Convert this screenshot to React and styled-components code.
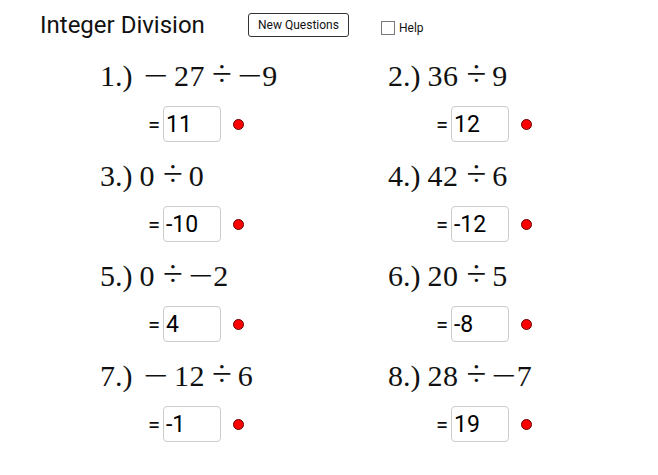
import React from 'react';
import styled, { createGlobalStyle } from 'styled-components';

const GlobalStyle = createGlobalStyle`
  body {
    margin: 0;
    background: #fff;
    font-family: Roboto, "Liberation Sans", sans-serif;
  }
`;

const M = '\u2212';

// each part: [text, kind, gap before] — kind: 'n' number, 'd' divide, 'm' minus, 'l' label
const problems = [
  { id: 1, parts: [['1.)', 'l', 0], [M, 'm', 14], ['27', 'n', 10], ['÷', 'd', 7], [M, 'm', 9], ['9', 'n', 4]], answer: '11' },
  { id: 2, parts: [['2.)', 'l', 0], ['36', 'n', 7], ['÷', 'd', 8], ['9', 'n', 6]], answer: '12' },
  { id: 3, parts: [['3.)', 'l', 0], ['0', 'n', 7], ['÷', 'd', 8], ['0', 'n', 6]], answer: '-10' },
  { id: 4, parts: [['4.)', 'l', 0], ['42', 'n', 7], ['÷', 'd', 8], ['6', 'n', 6]], answer: '-12' },
  { id: 5, parts: [['5.)', 'l', 0], ['0', 'n', 7], ['÷', 'd', 8], [M, 'm', 9], ['2', 'n', 4]], answer: '4' },
  { id: 6, parts: [['6.)', 'l', 0], ['20', 'n', 7], ['÷', 'd', 8], ['5', 'n', 6]], answer: '-8' },
  { id: 7, parts: [['7.)', 'l', 0], [M, 'm', 14], ['12', 'n', 10], ['÷', 'd', 7], ['6', 'n', 6]], answer: '-1' },
  { id: 8, parts: [['8.)', 'l', 0], ['28', 'n', 7], ['÷', 'd', 8], [M, 'm', 9], ['7', 'n', 4]], answer: '19' }
];

const App = () => (
  <Page>
    <GlobalStyle />
    <Header>
      <Title>Integer Division</Title>
      <Button type="button">New Questions</Button>
      <HelpLabel>
        <Box />
        Help
      </HelpLabel>
    </Header>
    <Grid>
      {problems.map((p) => (
        <Cell key={p.id}>
          <Question>
            {p.parts.map(([t, kind, gap], i) => (
              <Part key={i} gap={gap} kind={kind}>
                {t}
              </Part>
            ))}
          </Question>
          <AnswerRow>
            <Equals>=</Equals>
            <AnswerBox>{p.answer}</AnswerBox>
            <Dot />
          </AnswerRow>
        </Cell>
      ))}
    </Grid>
  </Page>
);

export default App;

const Page = styled.div`
  width: 658px;
  height: 475px;
`;

const Header = styled.div`
  display: flex;
  align-items: center;
  height: 50px;
  padding-left: 40px;
`;

const Title = styled.h1`
  margin: 0;
  font-size: 24px;
  font-weight: 400;
  color: #111;
  width: 208px;
`;

const Button = styled.button`
  font-family: Roboto, "Liberation Sans", sans-serif;
  font-size: 12px;
  color: #111;
  background: #fff;
  border: 1px solid #333;
  border-radius: 3px;
  height: 24px;
  width: 101px;
  padding: 0;
  margin-top: -1px;
`;

const HelpLabel = styled.label`
  display: flex;
  align-items: center;
  gap: 4px;
  margin-left: 32px;
  margin-top: 5px;
  font-size: 12px;
  color: #111;
`;

const Box = styled.span`
  width: 12px;
  height: 12px;
  border: 1px solid #777;
  background: #fff;
`;

const Grid = styled.div`
  display: grid;
  grid-template-columns: 288px 270px;
  grid-auto-rows: 100px;
  padding-left: 100px;
  margin-top: 5px;
`;

const Cell = styled.div`
  display: flex;
  flex-direction: column;
`;

const Question = styled.div`
  display: flex;
  align-items: baseline;
  height: 40px;
  padding-top: 4px;
  box-sizing: border-box;
  font-family: "Liberation Serif", "DejaVu Serif", serif;
  font-size: 30px;
  line-height: 30px;
  color: #111;
`;

const sizes = { n: 30, l: 30, d: 36, m: 31 };

const Part = styled.span`
  display: inline-block;
  margin-left: ${({ gap }) => gap}px;
  letter-spacing: ${({ kind }) => (kind === 'n' ? 0.5 : 0)}px;
  font-size: ${({ kind }) => sizes[kind]}px;
  transform: ${({ kind }) => (kind === 'm' ? 'scaleX(1.4)' : 'none')};
`;

const AnswerRow = styled.div`
  display: flex;
  align-items: center;
  margin-top: 11px;
  padding-left: 48px;
`;

const Equals = styled.span`
  font-size: 22px;
  color: #111;
  width: 15px;
`;

const AnswerBox = styled.div`
  box-sizing: border-box;
  width: 58px;
  height: 36px;
  border: 1px solid #ccc;
  border-radius: 4px;
  display: flex;
  align-items: center;
  padding-left: 2px;
  font-size: 23px;
  color: #000;
`;

const Dot = styled.span`
  box-sizing: border-box;
  width: 11px;
  height: 11px;
  border-radius: 50%;
  background: #f00;
  border: 1px solid #600;
  margin-left: 12px;
`;
